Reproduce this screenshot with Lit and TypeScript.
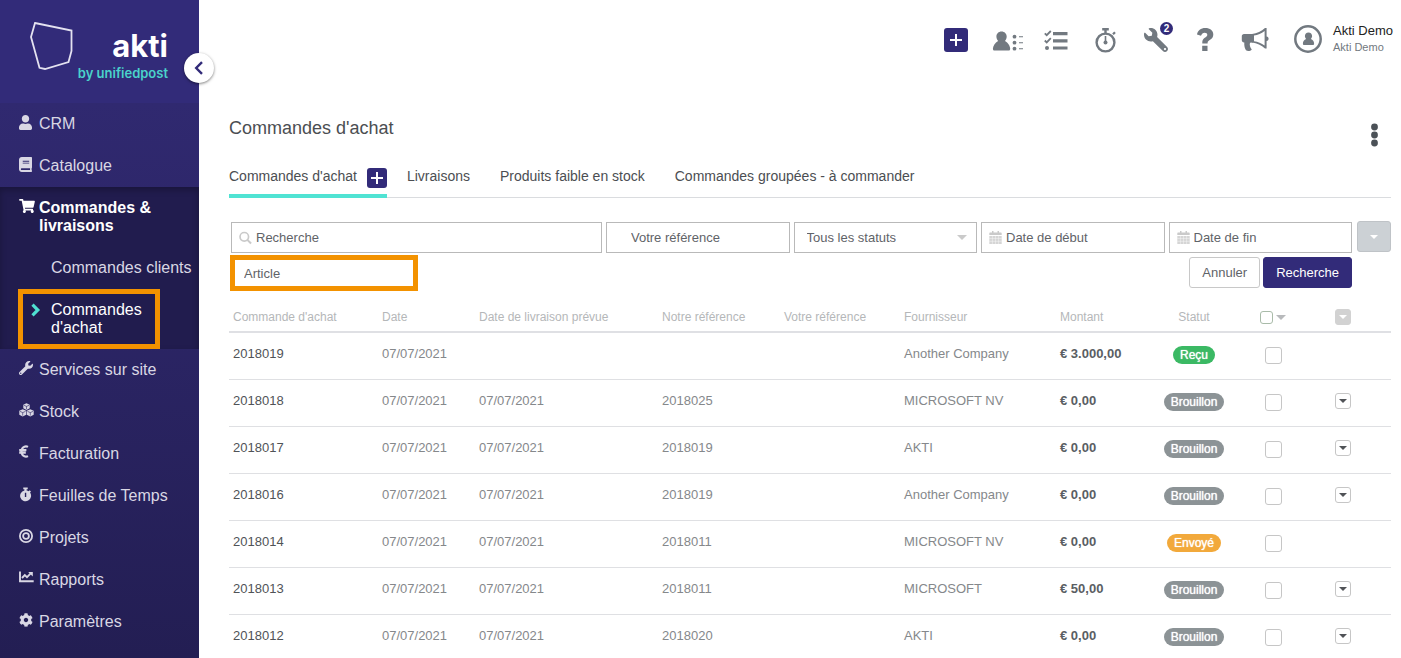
import { LitElement, html, css, svg, nothing, TemplateResult } from "lit";
import { customElement, property } from "lit/decorators.js";
import { classMap } from "lit/directives/class-map.js";

interface Glyph {
  box: string;
  body: TemplateResult;
}

const WRENCH =
  "M507.73 109.1c-2.24-9.03-13.54-12.09-20.12-5.51l-74.36 74.36-67.88-11.31-11.31-67.88 74.36-74.36c6.62-6.62 3.43-17.9-5.66-20.16-47.38-11.74-99.55.91-136.58 37.93-39.64 39.64-50.55 97.1-34.05 147.2L18.74 402.76c-24.99 24.99-24.99 65.51 0 90.5 24.99 24.99 65.51 24.99 90.5 0l213.21-213.21c50.12 16.71 107.47 5.68 147.37-34.22 37.07-37.07 49.7-89.32 37.91-136.73zM64 472c-13.25 0-24-10.75-24-24 0-13.26 10.75-24 24-24s24 10.74 24 24c0 13.25-10.75 24-24 24z";

const GLYPHS: Record<string, Glyph> = {
  user: {
    box: "0 0 448 512",
    body: svg`<path d="M224 256c70.7 0 128-57.3 128-128S294.7 0 224 0 96 57.3 96 128s57.3 128 128 128zm89.6 32h-16.7c-22.2 10.2-46.9 16-72.9 16s-50.6-5.8-72.9-16h-16.7C60.2 288 0 348.2 0 422.4V464c0 26.5 21.5 48 48 48h352c26.5 0 48-21.5 48-48v-41.6c0-74.2-60.2-134.4-134.4-134.4z"/>`,
  },
  book: {
    box: "0 0 448 512",
    body: svg`<path d="M448 360V24c0-13.3-10.7-24-24-24H96C43 0 0 43 0 96v320c0 53 43 96 96 96h328c13.3 0 24-10.7 24-24v-16c0-7.5-3.5-14.3-8.9-18.7-4.2-15.4-4.2-59.3 0-74.7 5.4-4.3 8.9-11.1 8.9-18.6zM128 134c0-3.3 2.7-6 6-6h212c3.3 0 6 2.7 6 6v20c0 3.3-2.7 6-6 6H134c-3.3 0-6-2.7-6-6v-20zm0 64c0-3.3 2.7-6 6-6h212c3.3 0 6 2.7 6 6v20c0 3.3-2.7 6-6 6H134c-3.3 0-6-2.7-6-6v-20zm253.4 250H96c-17.7 0-32-14.3-32-32 0-17.6 14.4-32 32-32h285.4c-1.9 17.1-1.9 46.9 0 64z"/>`,
  },
  cart: {
    box: "0 0 576 512",
    body: svg`<path d="M528.12 301.319l47.273-208C578.806 78.301 567.391 64 551.99 64H159.208l-9.166-44.81C147.758 8.021 137.93 0 126.529 0H24C10.745 0 0 10.745 0 24v16c0 13.255 10.745 24 24 24h69.883l70.248 343.435C147.325 417.1 136 435.222 136 456c0 30.928 25.072 56 56 56s56-25.072 56-56c0-15.674-6.447-29.835-16.824-40h209.647C430.447 426.165 424 440.326 424 456c0 30.928 25.072 56 56 56s56-25.072 56-56c0-22.172-12.888-41.332-31.579-50.405l5.517-24.276c3.413-15.018-8.002-29.319-23.403-29.319H218.117l-6.545-32h293.145c11.206 0 20.92-7.754 23.403-18.681z"/>`,
  },
  wrench: { box: "0 0 512 512", body: svg`<path d="${WRENCH}"/>` },
  cubes: {
    box: "0 0 15 14",
    body: svg`<path d="M7.500 0.300 10.700 1.700v3.600L7.500 6.900 4.300 5.300V1.700zM3.700 6.300 7.200 7.700v4L3.700 13.500.3 11.800v-4zM11.300 6.300l3.400 1.500v4l-3.400 1.700-3.500-1.800v-4z"/><path d="M4.900 2.300 7.500 3.400l2.600-1.100M7.500 3.400v2.800M1 8.400l2.700 1.200 2.800-1.200M3.700 9.600v3M8.500 8.400l2.800 1.200L14 8.400M11.300 9.600v3" fill="none" stroke="#2a2462" stroke-width=".6"/>`,
  },
  euro: {
    box: "0 0 10 13",
    body: svg`<path d="M9 1.900A4.400 4.400 0 0 0 2.800 4.300Q2.100 6.500 2.800 8.700A4.400 4.400 0 0 0 9 11.100M.2 5.200h7.200M.2 7.700h6.600" fill="none" stroke="currentColor" stroke-width="2.200"/>`,
  },
  stopwatchSolid: {
    box: "0 0 14 15",
    body: svg`<path fill-rule="evenodd" d="M4.600 0h4.800v1.800H8.200v1.300a5.800 5.800 0 0 1 2.300.9l1-1 1.400 1.400-1 1A5.900 5.900 0 1 1 5.800 3.100V1.800H4.600zM6.300 5.600v4.600h1.500V5.600z"/>`,
  },
  target: {
    box: "0 0 14 14",
    body: svg`<circle cx="7" cy="7" r="6.100" fill="none" stroke="currentColor" stroke-width="1.800"/><circle cx="7" cy="7" r="2.900" fill="none" stroke="currentColor" stroke-width="1.800"/>`,
  },
  chart: {
    box: "0 0 15 12",
    body: svg`<path d="M1 .5v9.700h13.700" fill="none" stroke="currentColor" stroke-width="1.900"/><path d="M3 7 5.800 4 8 6.200 11.500 2.700" fill="none" stroke="currentColor" stroke-width="1.900"/><path d="M9.200 1h4.600v4.600z"/>`,
  },
  cog: {
    box: "0 0 512 512",
    body: svg`<path d="M487.4 315.7l-42.6-24.6c4.3-23.2 4.3-47 0-70.2l42.6-24.6c4.9-2.8 7.1-8.6 5.5-14-11.1-35.6-30-67.8-54.7-94.6-3.8-4.1-10-5.1-14.8-2.3L380.8 110c-17.9-15.4-38.5-27.3-60.8-35.1V25.8c0-5.6-3.9-10.5-9.4-11.7-36.7-8.2-74.3-7.8-109.2 0-5.5 1.2-9.4 6.1-9.4 11.7V75c-22.2 7.9-42.8 19.8-60.8 35.1L88.7 85.5c-4.9-2.8-11-1.9-14.8 2.3-24.7 26.7-43.6 58.9-54.7 94.6-1.7 5.4.6 11.2 5.5 14L67.3 221c-4.3 23.2-4.3 47 0 70.2l-42.6 24.6c-4.9 2.8-7.1 8.6-5.5 14 11.1 35.6 30 67.8 54.7 94.6 3.8 4.1 10 5.1 14.8 2.3l42.6-24.6c17.9 15.4 38.5 27.3 60.8 35.1v49.2c0 5.6 3.9 10.5 9.4 11.7 36.7 8.2 74.3 7.8 109.2 0 5.5-1.2 9.4-6.1 9.4-11.7v-49.2c22.2-7.9 42.8-19.8 60.8-35.1l42.6 24.6c4.9 2.8 11 1.9 14.8-2.3 24.7-26.7 43.6-58.9 54.7-94.6 1.500-5.500-.7-11.300-5.600-14.100zM256 336c-44.100 0-80-35.900-80-80s35.900-80 80-80 80 35.900 80 80-35.900 80-80 80z"/>`,
  },
  contacts: {
    box: "-2 -1 36 24",
    body: svg`<path d="M11.500 2.500c3 0 5.200 2.200 5.200 5 0 1.800-.8 3.200-1.700 4.400 3 1.600 5.200 5 5.200 7.800 0 1.200-.7 1.900-1.800 1.900H4.700c-1.100 0-1.800-.7-1.800-1.900 0-2.800 2.200-6.200 5.200-7.800-.9-1.200-1.700-2.600-1.700-4.400 0-2.800 2.200-5 5.100-5z"/><circle cx="24.500" cy="7.700" r="1.900"/><circle cx="24.500" cy="13.700" r="1.900"/><circle cx="24.500" cy="19.700" r="1.900"/><path d="M29 7.200h4v1h-4zM29 13.200h4v1h-4zM29 19.200h4v1h-4z"/>`,
  },
  tasks: {
    box: "0 -1 24 20",
    body: svg`<path d="M9 1h14.500v3.200H9zM9 8.200h14.500v3.200H9zM9 15.400h14.500v3.200H9z"/><circle cx="3" cy="17" r="2"/><path d="M.8 2.300 2.700 4.200 6.800 0M.8 9.500l1.900 1.900 4.100-4.200" fill="none" stroke="currentColor" stroke-width="1.800"/>`,
  },
  stopwatch: {
    box: "0 0 22 26",
    body: svg`<circle cx="10.500" cy="15.500" r="8.900" fill="none" stroke="currentColor" stroke-width="2.400"/><path d="M7.200 1h6.600v2.400H11.700v3H9.300v-3H7.200zM17.200 6.400l2-2 1.600 1.600-2 2zM9.700 9h1.600v6H9.700z"/><circle cx="10.500" cy="15.500" r="2"/>`,
  },
  question: {
    box: "1 0 18 26",
    body: svg`<path d="M1 7.500C1.700 3.500 4.800 1 9.300 1c4.700 0 8 2.600 8 6.400 0 5.400-5.700 5.300-5.700 8.300v.8H6.300v-1.400c0-4.400 5-4.800 5-7.200 0-1.300-1-2.100-2.600-2.100-1.800 0-2.900 1-3.700 3zM6.200 18.700h5.300v5.300H6.200z"/>`,
  },
  bullhorn: {
    box: "2 0 30 26",
    body: svg`<path d="M14 7v8.500l-3 .2c-.7 2.500.2 4.700 1.800 6.800-1.700 1.900-4.200 1.900-5.800.8-1.200-2-2-4.500-1.700-7.800H5c-1.300 0-2.200-1-2.200-2.200V9.200C2.800 8 3.700 7 5 7z"/><path fill-rule="evenodd" d="M13 7c5-.4 9.400-2.600 13-6h1.600v8.500c1.300.3 2 1.200 2 2.200s-.7 2-2 2.300v7.500H26c-3.600-3.400-8-5.500-13-6zm2 1.500v5.700c4 .5 7.300 2 10.600 4.300V4c-3.300 2.500-6.700 4-10.600 4.500z"/>`,
  },
  avatar: {
    box: "0 0 28 28",
    body: svg`<circle cx="14" cy="14" r="12.700" fill="none" stroke="currentColor" stroke-width="2.500"/><path d="M14.500 7.500c2.200 0 3.600 1.600 3.600 3.500 0 1.200-.5 2.100-1.200 2.900 1.900.8 3.200 2.500 3.200 4.500 0 .9-.5 1.600-1.400 1.600h-8.400c-.9 0-1.400-.7-1.400-1.600 0-2 1.300-3.700 3.200-4.500-.7-.8-1.200-1.700-1.200-2.900 0-1.900 1.400-3.500 3.600-3.500z"/>`,
  },
  plus: {
    box: "0 0 12 12",
    body: svg`<path d="M5 0h2v5h5v2H7v5H5V7H0V5h5z"/>`,
  },
  chevronLeft: {
    box: "0 0 10 14",
    body: svg`<path d="M8 1.200 2.200 7 8 12.800" fill="none" stroke="currentColor" stroke-width="2.400"/>`,
  },
  chevronRight: {
    box: "0 0 10 14",
    body: svg`<path d="M1.500 1.700 6.800 7l-5.300 5.300" fill="none" stroke="currentColor" stroke-width="3.200"/>`,
  },
  search: {
    box: "0 0 14 14",
    body: svg`<circle cx="5.700" cy="5.700" r="4.600" fill="none" stroke="currentColor" stroke-width="1.800"/><path d="m9 9 4 4" fill="none" stroke="currentColor" stroke-width="2.200"/>`,
  },
  calendar: {
    box: "0 0 13 13",
    body: svg`<path d="M1 1.500h2V0h1.500v1.500h4V0H10v1.500h2q.7 0 .7.700V4H.3V2.200q0-.7.7-.7z"/><path d="M.3 5h12.400v8H.3z" opacity=".8"/><path d="M3.400 5v8M6.500 5v8M9.600 5v8M.3 7.600h12.400M.3 10.300h12.400" stroke="#fff" stroke-width=".4"/>`,
  },
  caret: { box: "0 0 10 5", body: svg`<path d="M0 0h10L5 5z"/>` },
  kebab: {
    box: "0 0 8 24",
    body: svg`<circle cx="3.500" cy="4" r="3.400"/><circle cx="3.500" cy="12" r="3.400"/><circle cx="3.500" cy="20" r="3.400"/>`,
  },
};

const icon = (name: string, width: number, height: number) => html`<svg
  width=${width}
  height=${height}
  viewBox=${GLYPHS[name].box}
  fill="currentColor"
  aria-hidden="true"
>${GLYPHS[name].body}</svg>`;

const base = css`
  * {
    box-sizing: border-box;
  }
  svg {
    display: block;
    flex: none;
  }
  a {
    color: inherit;
    text-decoration: none;
  }
  button {
    display: flex;
    align-items: center;
    justify-content: center;
    padding: 0;
    border: 0;
    background: none;
    color: inherit;
    font: inherit;
    cursor: pointer;
  }
`;

interface NavItem {
  label: string;
  icon: string;
  size: [number, number];
  children?: { label: string; current?: boolean }[];
}

const NAV: NavItem[] = [
  { label: "CRM", icon: "user", size: [13, 15] },
  { label: "Catalogue", icon: "book", size: [13, 15] },
  {
    label: "Commandes & livraisons",
    icon: "cart",
    size: [16, 14],
    children: [
      { label: "Commandes clients" },
      { label: "Commandes d'achat", current: true },
    ],
  },
  { label: "Services sur site", icon: "wrench", size: [14, 14] },
  { label: "Stock", icon: "cubes", size: [15, 14] },
  { label: "Facturation", icon: "euro", size: [10, 13] },
  { label: "Feuilles de Temps", icon: "stopwatchSolid", size: [13, 15] },
  { label: "Projets", icon: "target", size: [14, 14] },
  { label: "Rapports", icon: "chart", size: [15, 12] },
  { label: "Paramètres", icon: "cog", size: [14, 14] },
];

@customElement("side-nav")
export class SideNav extends LitElement {
  static styles = [
    base,
    css`
      :host {
        position: relative;
        display: flex;
        flex-direction: column;
        width: 199px;
        flex: none;
        color: #d9d7e4;
        background: #322b79;
        font-size: 16px;
        line-height: 18px;
      }
      .logo {
        display: flex;
        height: 103px;
        padding: 21px 31px 0 29px;
        justify-content: space-between;
      }
      .mark {
        margin-right: -20px;
      }
      .words {
        display: flex;
        flex-direction: column;
        align-items: flex-end;
        padding-top: 6px;
        font-family: Inter, sans-serif;
        font-weight: 700;
        white-space: nowrap;
      }
      .name {
        color: #fff;
        font-size: 31px;
        line-height: 38px;
      }
      .tagline {
        color: #4ad3cb;
        font-size: 13px;
        line-height: 16px;
        font-weight: 600;
      }
      .toggle {
        position: absolute;
        top: 53px;
        right: -15px;
        z-index: 1;
        width: 30px;
        height: 30px;
        border-radius: 50%;
        color: #322b79;
        background: #fff;
        box-shadow: 0 1px 3px rgba(0, 0, 0, 0.5);
      }
      nav {
        flex: 1;
        background: linear-gradient(#302970, #231e53);
      }
      .item {
        display: flex;
        padding: 12px 8px 12px 19px;
      }
      .glyph {
        width: 20px;
        flex: none;
      }
      .group {
        background: #211c4e;
        box-shadow: inset 0 3px 6px rgba(0, 0, 0, 0.25);
      }
      .group .item {
        padding-right: 40px;
        color: #fff;
        font-weight: 700;
      }
      .sub {
        display: block;
        padding: 12px 0 12px 51px;
        white-space: nowrap;
      }
      .sub.current {
        display: flex;
        margin: 0 39px 0 18px;
        padding: 7px 10px 7px 8px;
        border: 5px solid #f39200;
        color: #fff;
        white-space: normal;
      }
      .pointer {
        width: 20px;
        flex: none;
        padding-top: 2px;
        color: #4fe0d2;
      }
    `,
  ];

  render() {
    return html`
      <a class="logo" href="#" aria-label="akti by unifiedpost">
        <svg class="mark" width="46" height="50" viewBox="0 0 46 50" fill="none" stroke="#e4e2f0" stroke-width="1.800" aria-hidden="true">
          <path d="M6 2 42.500 9.600V30L39.500 41 16 48l-5.500-1.200L2 16z" />
        </svg>
        <span class="words">
          <span class="name">akti</span>
          <span class="tagline">by unifiedpost</span>
        </span>
      </a>
      <button class="toggle" aria-label="Réduire le menu">${icon("chevronLeft", 10, 14)}</button>
      <nav>
        ${NAV.map((item) => {
          const link = html`<a class="item" href="#">
            <span class="glyph">${icon(item.icon, item.size[0], item.size[1])}</span>
            <span>${item.label}</span>
          </a>`;
          return item.children
            ? html`<div class="group">
                ${link}
                ${item.children.map(
                  (child) => html`<a class=${classMap({ sub: true, current: !!child.current })} href="#">
                    ${child.current
                      ? html`<span class="pointer">${icon("chevronRight", 10, 14)}</span>`
                      : nothing}
                    <span>${child.label}</span>
                  </a>`
                )}
              </div>`
            : link;
        })}
      </nav>
    `;
  }
}

@customElement("top-bar")
export class TopBar extends LitElement {
  static styles = [
    base,
    css`
      :host {
        display: flex;
        justify-content: flex-end;
        align-items: center;
        height: 80px;
        padding-right: 8px;
        color: #727980;
      }
      .tool {
        position: relative;
        width: 50px;
        height: 50px;
      }
      .add {
        display: flex;
        align-items: center;
        justify-content: center;
        width: 24px;
        height: 24px;
        border-radius: 3px;
        color: #fff;
        background: #322b79;
      }
      .flip {
        transform: scaleX(-1);
      }
      .count {
        position: absolute;
        top: 7px;
        right: 8px;
        width: 13px;
        height: 13px;
        border-radius: 50%;
        color: #fff;
        background: #322b79;
        font-size: 10px;
        font-weight: 700;
        line-height: 13px;
        text-align: center;
      }
      .account {
        display: flex;
        align-items: center;
        gap: 11px;
        margin-left: 13px;
        padding-bottom: 2px;
      }
      .who {
        display: flex;
        flex-direction: column;
        font-size: 11px;
        line-height: 17px;
      }
      .who strong {
        color: #222;
        font-size: 13px;
        font-weight: 400;
      }
    `,
  ];

  render() {
    return html`
      <button class="tool" aria-label="Ajouter"><span class="add">${icon("plus", 12, 12)}</span></button>
      <button class="tool" aria-label="Contacts">${icon("contacts", 36, 24)}</button>
      <button class="tool" aria-label="Tâches">${icon("tasks", 24, 20)}</button>
      <button class="tool" aria-label="Chronomètre">${icon("stopwatch", 22, 26)}</button>
      <button class="tool" aria-label="Outils">
        <span class="flip">${icon("wrench", 24, 24)}</span>
        <span class="count">2</span>
      </button>
      <button class="tool" aria-label="Aide">${icon("question", 18, 26)}</button>
      <button class="tool" aria-label="Annonces">${icon("bullhorn", 30, 26)}</button>
      <a class="account" href="#">
        ${icon("avatar", 28, 28)}
        <span class="who"><strong>Akti Demo</strong><span>Akti Demo</span></span>
      </a>
    `;
  }
}

@customElement("order-filters")
export class OrderFilters extends LitElement {
  static styles = [
    base,
    css`
      :host {
        display: block;
        color: #5f6368;
        font-size: 13px;
        line-height: 15px;
      }
      .line {
        display: flex;
        gap: 5px;
        padding-left: 2px;
      }
      .fields {
        display: grid;
        grid-template-columns: repeat(6, 1fr);
        gap: 4px;
        flex: 1;
        padding-top: 1px;
      }
      .field {
        display: flex;
        align-items: center;
        height: 31px;
        padding: 0 7px;
        gap: 4px;
        border: 1px solid #b9b9b9;
        color: #cacaca;
        min-width: 0;
      }
      .wide {
        grid-column: span 2;
      }
      .indent {
        padding-left: 24px;
      }
      .choice {
        padding-left: 12px;
        padding-right: 9px;
      }
      input,
      select {
        flex: 1;
        min-width: 0;
        width: 100%;
        margin: 0;
        padding: 0;
        border: 0;
        outline: 0;
        appearance: none;
        background: none;
        color: #5f6368;
        font: inherit;
      }
      input::placeholder {
        color: #5f6368;
        opacity: 1;
      }
      .more {
        width: 34px;
        height: 31px;
        border: 1px solid #bfc3c7;
        border-radius: 3px;
        color: #fff;
        background: #ccd1d5;
      }
      .second {
        display: flex;
        align-items: flex-start;
        gap: 3px;
        padding: 2px 39px 0 1px;
      }
      .article {
        flex: none;
        width: 188px;
        height: 36px;
        margin-right: auto;
        padding: 0 9px;
        border: 5px solid #f39200;
      }
      .btn {
        height: 31px;
        margin: 2px 0;
        padding: 0 12px;
        border: 1px solid #c8c8c8;
        border-radius: 3px;
      }
      .btn.primary {
        border-color: #322b79;
        color: #fff;
        background: #322b79;
      }
    `,
  ];

  render() {
    return html`
      <form @submit=${(e: Event) => e.preventDefault()}>
        <div class="line">
          <div class="fields">
            <label class="field wide">${icon("search", 13, 14)}
              <input type="text" placeholder="Recherche" aria-label="Recherche" />
            </label>
            <label class="field indent">
              <input type="text" placeholder="Votre référence" aria-label="Votre référence" />
            </label>
            <label class="field choice">
              <select aria-label="Statut"><option>Tous les statuts</option></select>
              ${icon("caret", 10, 5)}
            </label>
            <label class="field">${icon("calendar", 13, 13)}
              <input type="text" placeholder="Date de début" aria-label="Date de début" />
            </label>
            <label class="field">${icon("calendar", 13, 13)}
              <input type="text" placeholder="Date de fin" aria-label="Date de fin" />
            </label>
          </div>
          <button class="more" type="button" aria-label="Plus de filtres">${icon("caret", 8, 4)}</button>
        </div>
        <div class="second">
          <input class="article" type="text" placeholder="Article" aria-label="Article" />
          <button class="btn" type="reset">Annuler</button>
          <button class="btn primary" type="submit">Recherche</button>
        </div>
      </form>
    `;
  }
}

interface Order {
  id: string;
  delivery: string;
  ref: string;
  supplier: string;
  amount: string;
  status: "Reçu" | "Brouillon" | "Envoyé";
}

const ORDERS: Order[] = [
  { id: "2018019", delivery: "", ref: "", supplier: "Another Company", amount: "€ 3.000,00", status: "Reçu" },
  { id: "2018018", delivery: "07/07/2021", ref: "2018025", supplier: "MICROSOFT NV", amount: "€ 0,00", status: "Brouillon" },
  { id: "2018017", delivery: "07/07/2021", ref: "2018019", supplier: "AKTI", amount: "€ 0,00", status: "Brouillon" },
  { id: "2018016", delivery: "07/07/2021", ref: "2018019", supplier: "Another Company", amount: "€ 0,00", status: "Brouillon" },
  { id: "2018014", delivery: "07/07/2021", ref: "2018011", supplier: "MICROSOFT NV", amount: "€ 0,00", status: "Envoyé" },
  { id: "2018013", delivery: "07/07/2021", ref: "2018011", supplier: "MICROSOFT", amount: "€ 50,00", status: "Brouillon" },
  { id: "2018012", delivery: "07/07/2021", ref: "2018020", supplier: "AKTI", amount: "€ 0,00", status: "Brouillon" },
];

@customElement("order-table")
export class OrderTable extends LitElement {
  @property({ attribute: false }) orders: Order[] = ORDERS;

  static styles = [
    base,
    css`
      :host {
        display: block;
      }
      table {
        width: 100%;
        border-collapse: separate;
        border-spacing: 0;
        table-layout: fixed;
        color: #85888b;
        font-size: 13px;
        line-height: 15px;
      }
      th,
      td {
        padding: 0 4px;
        text-align: left;
        white-space: nowrap;
      }
      th {
        height: 30px;
        border-bottom: 2px solid #dfe0e4;
        color: #b5b7b9;
        font-size: 12px;
        font-weight: 400;
      }
      td {
        height: 47px;
        padding-bottom: 6px;
        border-bottom: 1px solid #dfe0e3;
      }
      .c-id { width: 149px; }
      .c-date { width: 97px; }
      .c-due { width: 183px; }
      .c-ours { width: 122px; }
      .c-yours { width: 120px; }
      .c-supplier { width: 156px; }
      .c-amount { width: 89px; }
      .c-status { width: 98px; }
      .c-pick { width: 60px; }
      .c-menu { width: 88px; }
      .id {
        color: #505357;
      }
      .amount {
        color: #5a5e63;
        font-weight: 700;
      }
      .mid {
        padding-bottom: 2px;
        text-align: center;
      }
      th.mid {
        padding-bottom: 0;
      }
      .menu {
        padding-right: 12px;
      }
      td.menu {
        padding-bottom: 4px;
      }
      .pill {
        display: inline-block;
        padding: 0 7px;
        border-radius: 9px;
        color: #fff;
        background: #8c9396;
        font-size: 12px;
        line-height: 18px;
        text-shadow: 0 0 1px #fff;
      }
      .pill.done {
        background: #3bb964;
      }
      .pill.sent {
        background: #f2a93b;
      }
      input {
        display: block;
        width: 17px;
        height: 17px;
        margin: 0 auto;
        appearance: none;
        border: 1px solid #c6c6c6;
        border-radius: 3px;
        background: #fff;
      }
      .all {
        display: flex;
        align-items: center;
        justify-content: center;
        gap: 3px;
        color: #b8babc;
      }
      .all input {
        width: 13px;
        height: 13px;
        margin: 0;
        border-color: #a9bba9;
      }
      .drop {
        width: 16px;
        height: 16px;
        margin: 0 auto;
        border: 1px solid #c6c6c6;
        border-radius: 3px;
        color: #505357;
      }
      .drop.head {
        border-color: #d2d2d2;
        color: #fff;
        background: #d2d2d2;
      }
    `,
  ];

  render() {
    return html`
      <table>
        <thead>
          <tr>
            <th class="c-id">Commande d'achat</th>
            <th class="c-date">Date</th>
            <th class="c-due">Date de livraison prévue</th>
            <th class="c-ours">Notre référence</th>
            <th class="c-yours">Votre référence</th>
            <th class="c-supplier">Fournisseur</th>
            <th class="c-amount">Montant</th>
            <th class="c-status mid">Statut</th>
            <th class="c-pick mid">
              <span class="all">
                <input type="checkbox" aria-label="Tout sélectionner" />
                <button aria-label="Options de sélection">${icon("caret", 10, 5)}</button>
              </span>
            </th>
            <th class="c-menu mid menu">
              <button class="drop head" aria-label="Colonnes">${icon("caret", 8, 4)}</button>
            </th>
          </tr>
        </thead>
        <tbody>
          ${this.orders.map(
            (o) => html`<tr>
              <td class="id">${o.id}</td>
              <td>07/07/2021</td>
              <td>${o.delivery}</td>
              <td>${o.ref}</td>
              <td></td>
              <td>${o.supplier}</td>
              <td class="amount">${o.amount}</td>
              <td class="mid">
                <span class=${classMap({ pill: true, done: o.status === "Reçu", sent: o.status === "Envoyé" })}>${o.status}</span>
              </td>
              <td class="mid"><input type="checkbox" aria-label="Sélectionner ${o.id}" /></td>
              <td class="mid menu">
                ${o.status === "Brouillon"
                  ? html`<button class="drop" aria-label="Actions ${o.id}">${icon("caret", 8, 4)}</button>`
                  : nothing}
              </td>
            </tr>`
          )}
        </tbody>
      </table>
    `;
  }
}

@customElement("app-root")
export class AppRoot extends LitElement {
  static styles = [
    base,
    css`
      :host {
        display: flex;
        height: 100vh;
        background: #fff;
        color: #4b4e52;
        font-family: "Liberation Sans", Arial, sans-serif;
      }
      main {
        flex: 1;
        min-width: 0;
        overflow: auto;
        scrollbar-width: none;
      }
      .page {
        padding: 36px 10px 0 30px;
      }
      .heading {
        display: flex;
        justify-content: space-between;
        align-items: flex-start;
      }
      h1 {
        margin: 0;
        font-size: 18px;
        line-height: 24px;
        font-weight: 400;
      }
      .kebab {
        margin: 7px 12px 0 0;
        color: #4b5157;
      }
      .tabs {
        display: flex;
        margin-top: 21px;
        margin-bottom: 23px;
        border-bottom: 1px solid #dadcdf;
        font-size: 14px;
        line-height: 16px;
        white-space: nowrap;
      }
      .tab {
        display: flex;
        gap: 10px;
        margin-right: 30px;
        padding-bottom: 10px;
      }
      .tab.current {
        margin-right: 20px;
        margin-bottom: -1px;
        padding-bottom: 6px;
        border-bottom: 4px solid #50e3d3;
      }
      .add {
        width: 20px;
        height: 20px;
        border-radius: 3px;
        color: #fff;
        background: #322b79;
      }
      order-table {
        margin-top: 12px;
      }
    `,
  ];

  render() {
    return html`
      <side-nav></side-nav>
      <main>
        <top-bar></top-bar>
        <div class="page">
          <div class="heading">
            <h1>Commandes d'achat</h1>
            <button class="kebab" aria-label="Plus d'options">${icon("kebab", 8, 24)}</button>
          </div>
          <div class="tabs">
            <div class="tab current">
              <a href="#" aria-current="page">Commandes d'achat</a>
              <button class="add" aria-label="Nouvelle commande d'achat">${icon("plus", 12, 12)}</button>
            </div>
            <a class="tab" href="#">Livraisons</a>
            <a class="tab" href="#">Produits faible en stock</a>
            <a class="tab" href="#">Commandes groupées - à commander</a>
          </div>
          <order-filters></order-filters>
          <order-table></order-table>
        </div>
      </main>
    `;
  }
}
